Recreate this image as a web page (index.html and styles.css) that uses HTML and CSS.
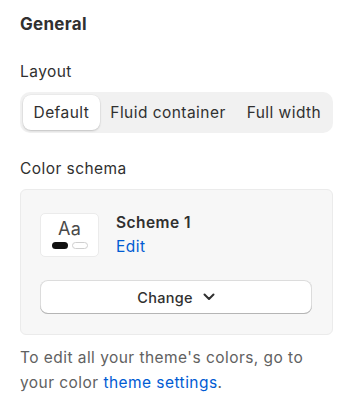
FILE: index.html
```html
<!DOCTYPE html>
<html>
<head>
<meta charset="utf-8">
<link rel="stylesheet" href="styles.css">
</head>
<body>
<div class="panel">
  <h2 class="title">General</h2>
  <div class="label layout-label">Layout</div>
  <div class="segmented">
    <div class="seg active">Default</div>
    <div class="seg">Fluid container</div>
    <div class="seg">Full width</div>
  </div>
  <div class="label schema-label">Color schema</div>
  <div class="card">
    <div class="scheme-row">
      <div class="swatch">
        <div class="aa">Aa</div>
        <div class="pills"><span class="pill dark"></span><span class="pill light"></span></div>
      </div>
      <div class="scheme-info">
        <div class="scheme-name">Scheme 1</div>
        <a class="edit">Edit</a>
      </div>
    </div>
    <button class="change">Change
      <svg class="chev" width="12" height="8" viewBox="0 0 12 8"><path d="M1.5 1.5 L6 6 L10.5 1.5" fill="none" stroke="#303030" stroke-width="2" stroke-linecap="round" stroke-linejoin="round"/></svg>
    </button>
  </div>
  <p class="help">To edit all your theme's colors, go to your color <a class="link">theme settings</a>.</p>
</div>
</body>
</html>
```
FILE: styles.css
```css
* { box-sizing: border-box; }
html, body { margin: 0; padding: 0; background: #fff; }
body {
  font-family: Inter, "Noto Sans", sans-serif;
  color: #303030;
  font-size: 15.5px;
  letter-spacing: 0.45px;
}
.panel {
  padding: 12px 17px 0 20px;
  display: flex;
  flex-direction: column;
}
.title {
  margin: 0;
  font-size: 17px;
  line-height: 24px;
  font-weight: 680;
  letter-spacing: 0.3px;
}
.label {
  font-size: 15.5px;
  line-height: 20px;
  color: #303030;
}
.layout-label { margin-top: 26px; }
.segmented {
  margin-top: 10px;
  background: #f1f1f1;
  border-radius: 10px;
  padding: 3px;
  display: flex;
  height: 41px;
}
.seg {
  padding: 0 10.5px;
  display: flex;
  align-items: center;
  border-radius: 8px;
  font-size: 15.5px;
  color: #303030;
  white-space: nowrap;
}
.seg.active {
  background: #fff;
  box-shadow: 0 1px 2px rgba(0,0,0,0.18), 0 0 0 0.5px rgba(0,0,0,0.04);
}
.schema-label { margin-top: 26px; }
.card {
  margin-top: 10px;
  background: #f7f7f7;
  border: 1px solid #ebebeb;
  border-radius: 6px;
  padding: 23px 20px 20px 19px;
  display: flex;
  flex-direction: column;
  gap: 23px;
}
.scheme-row {
  display: flex;
  gap: 17px;
}
.swatch {
  width: 59px;
  height: 44px;
  background: #fff;
  border: 1px solid #ebebeb;
  border-radius: 5px;
  display: flex;
  flex-direction: column;
  align-items: center;
  padding-top: 5px;
}
.aa {
  font-size: 18px;
  line-height: 20px;
  letter-spacing: 0.2px;
  color: #4a4a4a;
}
.pills {
  display: flex;
  gap: 4px;
  margin-top: 3px;
}
.pill {
  width: 16px;
  height: 7px;
  border-radius: 4px;
}
.pill.dark { background: #111; }
.pill.light { background: #fff; border: 1px solid #cfcfcf; }
.scheme-info {
  display: flex;
  flex-direction: column;
}
.scheme-name {
  font-size: 15.5px;
  line-height: 20px;
  font-weight: 600;
  color: #303030;
}
.edit {
  margin-top: 4px;
  font-size: 15.5px;
  line-height: 20px;
  color: #005bd3;
}
.change {
  height: 34px;
  background: #fff;
  border: none;
  border-radius: 8px;
  box-shadow: inset 0 -1px 0 #b5b5b5, inset 0 0 0 1px #dcdcdc;
  font-family: inherit;
  font-size: 14.5px;
  letter-spacing: 0.25px;
  font-weight: 550;
  color: #303030;
  display: flex;
  align-items: center;
  justify-content: center;
  gap: 10px;
  padding: 0;
}
.chev { display: block; }
.help {
  margin: 10px 0 0;
  font-size: 15.5px;
  line-height: 25px;
  color: #616161;
}
.link { color: #005bd3; }
```
